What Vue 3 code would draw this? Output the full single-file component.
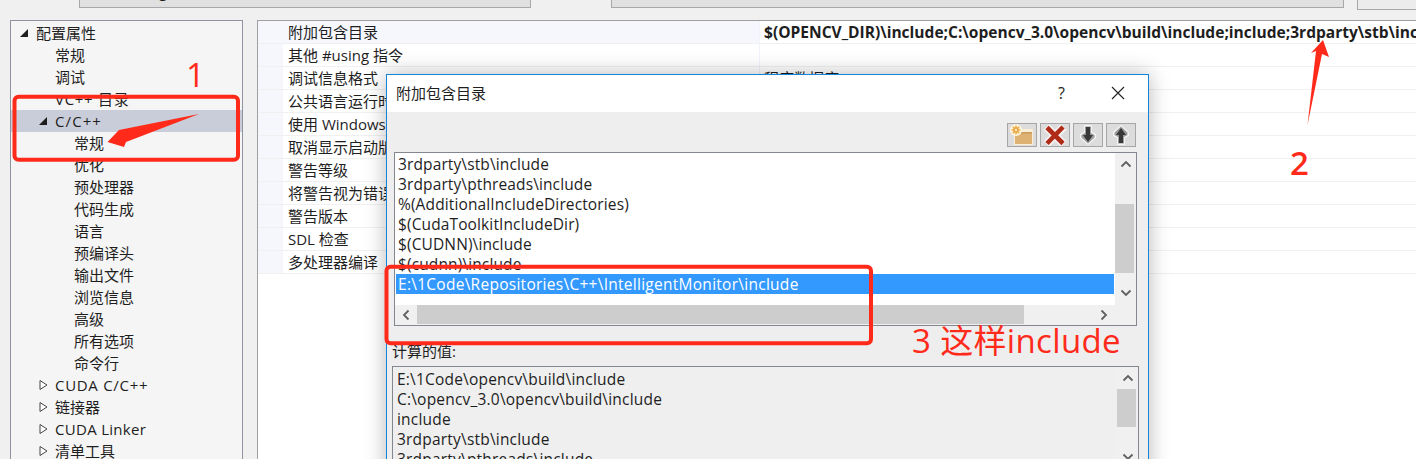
<script setup>
const tree = [
  { t: '配置属性', l: 0, a: 'open' },
  { t: '常规', l: 1 },
  { t: '调试', l: 1 },
  { t: 'VC++ 目录', l: 1, ls: 0.7 },
  { t: 'C/C++', l: 1, a: 'open', sel: true, ls: 1.1 },
  { t: '常规', l: 2 },
  { t: '优化', l: 2 },
  { t: '预处理器', l: 2 },
  { t: '代码生成', l: 2 },
  { t: '语言', l: 2 },
  { t: '预编译头', l: 2 },
  { t: '输出文件', l: 2 },
  { t: '浏览信息', l: 2 },
  { t: '高级', l: 2 },
  { t: '所有选项', l: 2 },
  { t: '命令行', l: 2 },
  { t: 'CUDA C/C++', l: 1, a: 'closed', ls: 0.7 },
  { t: '链接器', l: 1, a: 'closed' },
  { t: 'CUDA Linker', l: 1, a: 'closed', ls: 0.3 },
  { t: '清单工具', l: 1, a: 'closed' }
]
const props = [
  ['附加包含目录', '$(OPENCV_DIR)\\include;C:\\opencv_3.0\\opencv\\build\\include;include;3rdparty\\stb\\include;3rdparty\\pthreads\\include'],
  ['其他 #using 指令', ''],
  ['调试信息格式', '程序数据库 (/Zi)'],
  ['公共语言运行时支持', ''],
  ['使用 Windows 运行库扩展', ''],
  ['取消显示启动版权标志', ''],
  ['警告等级', ''],
  ['将警告视为错误', ''],
  ['警告版本', ''],
  ['SDL 检查', ''],
  ['多处理器编译', '']
]
const lines = [
  '3rdparty\\stb\\include',
  '3rdparty\\pthreads\\include',
  '%(AdditionalIncludeDirectories)',
  '$(CudaToolkitIncludeDir)',
  '$(CUDNN)\\include',
  '$(cudnn)\\include',
  'E:\\1Code\\Repositories\\C++\\IntelligentMonitor\\include'
]
const computed = [
  'E:\\1Code\\opencv\\build\\include',
  'C:\\opencv_3.0\\opencv\\build\\include',
  'include',
  '3rdparty\\stb\\include',
  '3rdparty\\pthreads\\include'
]
</script>

<template>
  <div class="app">
    <div class="topbar">
      <span class="lab lab1">配置(C):</span>
      <div class="field f1"><span>活动(Debug)</span></div>
      <span class="lab lab2">平台(P):</span>
      <div class="field f2"><span>活动(x64)</span></div>
      <div class="topbtn"></div>
    </div>

    <div class="main">
      <div class="tree">
        <div
          v-for="(r, i) in tree"
          :key="i"
          class="trow"
          :class="['lv' + r.l, { sel: r.sel }]"
          :style="r.ls ? { letterSpacing: r.ls + 'px' } : null"
        >
          <svg v-if="r.a" class="tw" width="9" height="10" viewBox="0 0 9 10">
            <polygon v-if="r.a === 'open'" points="8,1 8,9 0,9" fill="#1e1e1e" />
            <polygon v-else points="1,0.5 8,5 1,9.5" fill="#fff" stroke="#444" stroke-width="1" />
          </svg>
          <span>{{ r.t }}</span>
        </div>
      </div>

      <div class="grid">
        <div v-for="(p, i) in props" :key="i" class="prow" :class="{ first: i === 0 }">
          <div class="stripe"></div>
          <div class="name">{{ p[0] }}</div>
          <div class="val">{{ p[1] }}</div>
        </div>
      </div>
    </div>

    <div class="dialog">
      <div class="titlebar">
        <span class="title">附加包含目录</span>
        <span class="help">?</span>
        <svg class="close" width="14" height="14" viewBox="0 0 14 14">
          <path d="M1 1 L13 13 M13 1 L1 13" stroke="#222" stroke-width="1.1" fill="none" />
        </svg>
      </div>
      <div class="body">
        <div class="toolbar">
          <button class="tbtn">
            <svg width="26" height="22" viewBox="0 0 26 22">
              <path d="M5 6 H10 L11 5 H24 V21 H5 Z" fill="#fbeed8" />
              <path d="M6 8 H23 V20 H6 Z" fill="#deb273" />
              <path d="M10 8 H23 V9.5 H10 Z" fill="#c99a5c" />
              <circle cx="7" cy="6" r="6" fill="#fff6e0" />
              <g stroke="#ecb04a" stroke-width="1.6">
                <path d="M7 1.5 V10.5 M2.5 6 H11.5 M3.8 2.8 L10.2 9.2 M10.2 2.8 L3.8 9.2" />
              </g>
              <circle cx="7" cy="6" r="2.8" fill="#e8a648" />
              <circle cx="7" cy="6" r="1.2" fill="#fde9b8" />
            </svg>
          </button>
          <button class="tbtn">
            <svg width="26" height="22" viewBox="0 0 26 22">
              <path d="M4.5 3 L21.5 20 M21.5 3 L4.5 20" stroke="#f6f3f1" stroke-width="8" fill="none" />
              <path d="M5 3.5 L21 19.5 M21 3 L5 19.5" stroke="#b02a18" stroke-width="4.6" fill="none" />
            </svg>
          </button>
          <button class="tbtn">
            <svg width="22" height="22" viewBox="0 0 22 22">
              <path d="M7 1 H15 V8 L19 10 V14 L11 21 L3 14 V10 L7 8 Z" fill="#f4f4f4" />
              <path d="M8 2.5 H14 V9 L17.5 11 V13.5 L11 19.5 L4.5 13.5 V11 L8 9 Z" fill="#9b9b9b" />
              <path d="M9 3 H13 V11 H16 L11 18 L6 11 H9 Z" fill="#383838" />
            </svg>
          </button>
          <button class="tbtn">
            <svg width="22" height="22" viewBox="0 0 22 22">
              <path d="M7 21 H15 V14 L19 12 V8 L11 1 L3 8 V12 L7 14 Z" fill="#f4f4f4" />
              <path d="M8 19.5 H14 V13 L17.5 11 V8.5 L11 2.5 L4.5 8.5 V11 L8 13 Z" fill="#9b9b9b" />
              <path d="M9 19 H13 V11 H16 L11 4 L6 11 H9 Z" fill="#383838" />
            </svg>
          </button>
        </div>

        <div class="list">
          <div class="lines">
            <div v-for="(l, i) in lines" :key="i" class="line" :class="{ on: i === 6 }">{{ l }}</div>
          </div>
          <div class="vbar">
            <div class="sb up"><svg width="12" height="8" viewBox="0 0 12 8"><path d="M1.5 6.5 L6 2 L10.5 6.5" stroke="#606060" stroke-width="1.8" fill="none" /></svg></div>
            <div class="vthumb t1"></div>
            <div class="grow"></div>
            <div class="sb dn"><svg width="12" height="8" viewBox="0 0 12 8"><path d="M1.5 1.5 L6 6 L10.5 1.5" stroke="#606060" stroke-width="1.8" fill="none" /></svg></div>
          </div>
          <div class="hbar">
            <div class="hb"><svg width="8" height="12" viewBox="0 0 8 12"><path d="M6.5 1.5 L2 6 L6.5 10.5" stroke="#606060" stroke-width="1.8" fill="none" /></svg></div>
            <div class="hthumb"></div>
            <div class="grow"></div>
            <div class="hb"><svg width="8" height="12" viewBox="0 0 8 12"><path d="M1.5 1.5 L6 6 L1.5 10.5" stroke="#606060" stroke-width="1.8" fill="none" /></svg></div>
          </div>
        </div>

        <div class="calc">计算的值:</div>
        <div class="box2">
          <div class="lines2">
            <div v-for="(l, i) in computed" :key="i" class="line">{{ l }}</div>
          </div>
          <div class="vbar v2">
            <div class="sb up"><svg width="12" height="8" viewBox="0 0 12 8"><path d="M1.5 6.5 L6 2 L10.5 6.5" stroke="#606060" stroke-width="1.8" fill="none" /></svg></div>
            <div class="vthumb t2"></div>
            <div class="grow"></div>
            <div class="sb dn"><svg width="12" height="8" viewBox="0 0 12 8"><path d="M1.5 1.5 L6 6 L10.5 1.5" stroke="#606060" stroke-width="1.8" fill="none" /></svg></div>
          </div>
        </div>
      </div>
    </div>

    <svg class="marks" width="1416" height="459" viewBox="0 0 1416 459">
      <rect x="14.5" y="96.8" width="223.5" height="63" rx="4" fill="none" stroke="#ff2a1a" stroke-width="4" />
      <rect x="386.5" y="266.8" width="484.5" height="76.5" rx="4" fill="none" stroke="#ff2a1a" stroke-width="4" />
      <polygon points="199,114 119,130 107.5,142 124,147 126,142" fill="#ff2a1a" />
      <polygon points="1323,40 1329,57 1322,54 1307.5,125 1316,51 1311,53" fill="#ff2a1a" />
    </svg>
    <span class="note n1">1</span>
    <span class="note n2">2</span>
    <span class="note n3">3 这样include</span>
  </div>
</template>

<style scoped>
.app {
  position: relative;
  width: 1416px;
  height: 459px;
  overflow: hidden;
  background: #f0f0f0;
  font-family: "Open Sans", "Noto Sans CJK SC", sans-serif;
  font-size: 15.5px;
  color: #1e1e1e;
}
.topbar {
  display: flex;
  align-items: flex-start;
  height: 20px;
  overflow: hidden;
}
.topbar > * { flex: none; }
.lab, .field span {
  display: block;
  line-height: 20px;
  margin-top: -19px;
  white-space: nowrap;
  font-size: 15px;
}
.lab1 { width: 67px; margin-left: 12px; }
.field {
  height: 7px;
  background: #e0e0e0;
  border: 1px solid #a8a8a8;
  border-top: 0;
  overflow: hidden;
  box-sizing: content-box;
}
.f1 { width: 443px; padding-left: 7px; }
.lab2 { width: 65px; margin-left: 15px; }
.f2 { width: 723px; padding-left: 8px; }
.topbtn {
  width: 60px;
  height: 10px;
  margin-left: 13px;
  background: #ececec;
  border: 1px solid #a8a8a8;
  border-top: 0;
  border-right: 0;
  box-sizing: border-box;
}
.main {
  display: flex;
  gap: 14px;
  padding-left: 10px;
  height: 439px;
}
.tree {
  width: 233px;
  flex: none;
  box-sizing: border-box;
  border: 1px solid #8f929f;
  border-bottom: 0;
  background: #f5f5f5;
  padding-top: 1px;
}
.trow {
  position: relative;
  height: 22px;
  line-height: 22px;
  font-size: 15px;
  white-space: nowrap;
}
.trow.sel { background: #c9ccd9; }
.lv0 { padding-left: 25px; }
.lv1 { padding-left: 44px; }
.lv2 { padding-left: 63px; }
.tw { position: absolute; top: 6px; }
.lv0 .tw { left: 9px; }
.lv1 .tw { left: 28px; }
.grid {
  flex: 1;
  border: 1px solid #a0a0a0;
  border-right: 0;
  border-bottom: 0;
  background: #fff;
  overflow: hidden;
}
.prow {
  display: flex;
  height: 23px;
  line-height: 22px;
  box-sizing: border-box;
  border-bottom: 1px solid #f0f0f0;
  font-size: 15px;
  white-space: nowrap;
}
.stripe { width: 25px; flex: none; background: #f5f7fc; }
.name {
  width: 477px;
  flex: none;
  padding-left: 5px;
  box-sizing: border-box;
  border-right: 1px solid #f0f3fa;
}
.first .name { background: #f5f7fc; }
.val { flex: 1; padding-left: 4px; overflow: hidden; font-size: 15px; }
.first .val { font-weight: 700; font-size: 15.55px; }
.dialog {
  position: absolute;
  left: 386px;
  top: 74px;
  width: 763px;
  height: 420px;
  box-sizing: border-box;
  border: 1px solid #1584d8;
  background: #fff;
  box-shadow: 0 0 20px rgba(0, 0, 0, 0.28);
  display: flex;
  flex-direction: column;
}
.titlebar {
  height: 37px;
  flex: none;
  display: flex;
  align-items: center;
  background: #fff;
  padding: 0 0 2px 9px;
  box-sizing: border-box;
}
.title { font-size: 15px; flex: 1; }
.help { font-size: 16px; margin-right: 46px; }
.close { margin-right: 23px; }
.body {
  flex: 1;
  background: #eeeeee;
  padding-left: 7px;
}
.toolbar {
  display: flex;
  justify-content: flex-end;
  gap: 3px;
  height: 24px;
  padding: 11px 12px 5px 0;
}
.tbtn {
  width: 30px;
  height: 24px;
  padding: 0;
  border: 1px solid #a6a6a6;
  background: #dcdcdc;
  display: flex;
  align-items: center;
  justify-content: center;
  box-sizing: border-box;
}
.list {
  width: 743px;
  height: 174px;
  box-sizing: border-box;
  border: 1px solid #828790;
  background: #fff;
  display: grid;
  grid-template-columns: 720px 21px;
  grid-template-rows: 152px 20px;
  overflow: hidden;
}
.lines { padding-top: 1px; letter-spacing: 0.12px; }
.line {
  height: 20px;
  line-height: 20px;
  padding-left: 2px;
  margin-left: 1px;
  white-space: nowrap;
}
.line.on { background: #3399ff; color: #fff; margin-right: 1px; letter-spacing: 0.27px; }
.vbar {
  grid-row: 1 / 3;
  grid-column: 2;
  background: #f0f0f0;
  display: flex;
  flex-direction: column;
}
.sb { height: 21px; flex: none; display: flex; align-items: center; justify-content: center; }
.dn { height: 22px; margin-bottom: 21px; }
.vthumb { background: #cdcdcd; flex: none; margin-right: 2px; }
.t1 { margin-top: 30px; height: 69px; }
.grow { flex: 1; }
.hbar {
  background: #f0f0f0;
  display: flex;
  align-items: stretch;
}
.hb { width: 22px; flex: none; display: flex; align-items: center; justify-content: center; }
.hthumb { width: 607px; flex: none; background: #cdcdcd; margin-bottom: 1px; }
.calc { margin-top: 16px; margin-left: -2px; height: 18px; line-height: 18px; font-size: 15px; }
.box2 {
  width: 747px;
  margin-left: -2px;
  margin-top: 6px;
  height: 103px;
  box-sizing: border-box;
  border: 1px solid #828790;
  display: flex;
  background: #efefef;
  overflow: hidden;
}
.lines2 { flex: 1; padding-top: 2px; letter-spacing: 0.2px; }
.box2 .line { margin-left: 2px; }
.v2 { width: 21px; flex: none; }
.v2 .sb.up { height: 22px; }
.v2 .sb.dn { margin-bottom: 0; }
.t2 { margin-top: 0; height: 38px; margin-right: 2px; }
.marks { position: absolute; left: 0; top: 0; pointer-events: none; }
.note {
  position: absolute;
  color: #ff2a1a;
  font-size: 33px;
  line-height: 40px;
  white-space: nowrap;
}
.n1 { left: 186px; top: 55px; }
.n2 { left: 1290px; top: 143px; font-weight: 600; }
.n3 { left: 912px; top: 321px; letter-spacing: 0.35px; }
</style>
